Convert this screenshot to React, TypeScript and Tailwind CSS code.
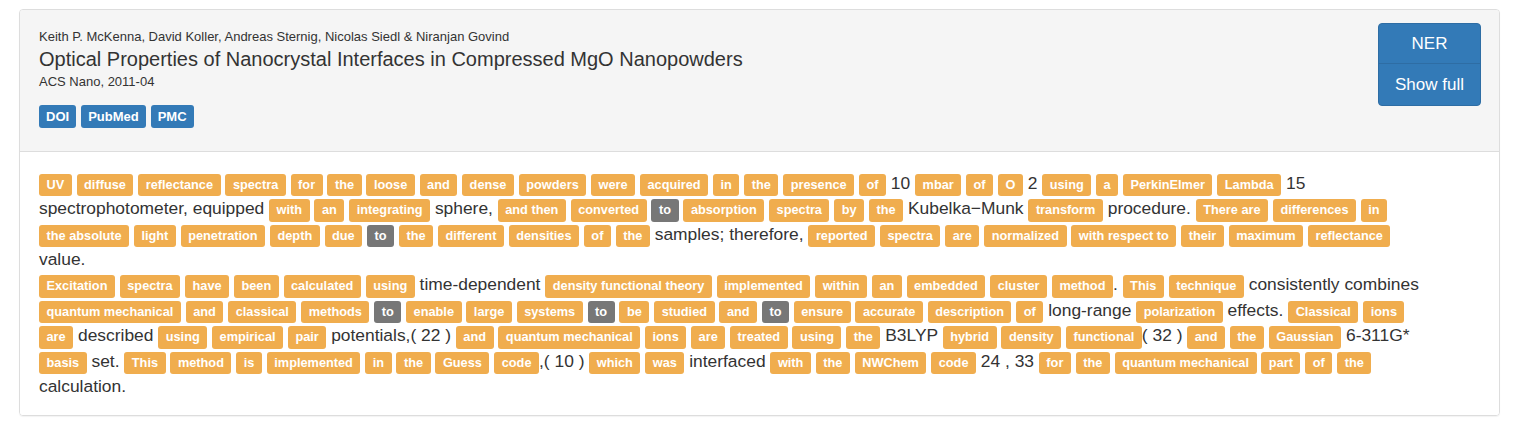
import React from 'react';

type Tok = { k: 'w' | 'd' | 't'; s: string };

// w = warning label, d = default (grey) label, t = plain text
const parse = (src: string): Tok[] => {
  const out: Tok[] = [];
  const re = /\[([^\]]+)\]|\{([^}]+)\}|([^[{]+)/g;
  let m: RegExpExecArray | null;
  while ((m = re.exec(src))) {
    if (m[1]) out.push({ k: 'w', s: m[1] });
    else if (m[2]) out.push({ k: 'd', s: m[2] });
    else out.push({ k: 't', s: m[3] });
  }
  return out;
};

const para1 =
  '[UV] [diffuse] [reflectance] [spectra] [for] [the] [loose] [and] [dense] [powders] [were] [acquired] [in] [the] [presence] [of] 10 [mbar] [of] [O] 2 [using] [a] [PerkinElmer] [Lambda] 15 spectrophotometer, equipped [with] [an] [integrating] sphere, [and then] [converted] {to} [absorption] [spectra] [by] [the] Kubelka−Munk [transform] procedure. [There are] [differences] [in] [the absolute] [light] [penetration] [depth] [due] {to} [the] [different] [densities] [of] [the] samples; therefore, [reported] [spectra] [are] [normalized] [with respect to] [their] [maximum] [reflectance] value.';

const para2 =
  '[Excitation] [spectra] [have] [been] [calculated] [using] time-dependent [density functional theory] [implemented] [within] [an] [embedded] [cluster] [method]. [This] [technique] consistently combines [quantum mechanical] [and] [classical] [methods] {to} [enable] [large] [systems] {to} [be] [studied] [and] {to} [ensure] [accurate] [description] [of] long-range [polarization] effects. [Classical] [ions] [are] described [using] [empirical] [pair] potentials,( 22 ) [and] [quantum mechanical] [ions] [are] [treated] [using] [the] B3LYP [hybrid] [density] [functional]( 32 ) [and] [the] [Gaussian] 6-311G* [basis] set. [This] [method] [is] [implemented] [in] [the] [Guess] [code],( 10 ) [which] [was] interfaced [with] [the] [NWChem] [code] 24 , 33 [for] [the] [quantum mechanical] [part] [of] [the] calculation.';

const Para = ({ src }: { src: string }) => (
  <div>
    {parse(src).map((t, i) =>
      t.k === 't' ? (
        <React.Fragment key={i}>{t.s}</React.Fragment>
      ) : (
        <span
          key={i}
          className={`inline-block rounded-[3px] px-[7.5px] pt-[4px] pb-[5px] text-[12.75px] font-bold leading-[13.5px] text-white ${
            t.k === 'w' ? 'bg-[#f0ad4e]' : 'bg-[#777777]'
          }`}
        >
          {t.s}
        </span>
      )
    )}
  </div>
);

const App: React.FC = () => {
  return (
    <div className="min-h-screen bg-white pt-[9px] pl-[19px] font-['Liberation_Sans',Arial,sans-serif] text-[#333333]">
      <div className="w-[1481px] overflow-hidden rounded-[4px] border border-[#dddddd] shadow-[0_1px_1px_rgba(0,0,0,0.05)]">
        <div className="flex justify-between border-b border-[#dddddd] bg-[#f5f5f5] pl-[19px] pr-[18px] pt-[13px] pb-[23px]">
          <div className="pt-[5px]">
            <div className="text-[13px] leading-[18px]">
              Keith P. McKenna, David Koller, Andreas Sternig, Nicolas Siedl &amp; Niranjan Govind
            </div>
            <div className="text-[20px] leading-[26px]">
              Optical Properties of Nanocrystal Interfaces in Compressed MgO Nanopowders
            </div>
            <div className="mt-[1px] text-[13px] leading-[18px]">ACS Nano, 2011-04</div>
            <div className="mt-[14px] flex gap-[5px]">
              {['DOI', 'PubMed', 'PMC'].map((b) => (
                <span
                  key={b}
                  className="rounded-[3px] bg-[#337ab7] px-[7px] pt-[4.5px] pb-[5px] text-[13px] font-bold leading-[13px] text-white"
                >
                  {b}
                </span>
              ))}
            </div>
          </div>
          <div className="flex h-[83px] w-[103px] flex-col overflow-hidden rounded-[4px] border border-[#2e6da4] bg-[#337ab7] text-[17px] text-white">
            <div className="flex h-[40px] items-center justify-center border-b border-[#2e6da4]">NER</div>
            <div className="flex flex-1 items-center justify-center">Show full</div>
          </div>
        </div>
        <div className="bg-white pl-[19px] pt-[19px] pb-[16px]">
          <div className="w-[1396px] text-[17.4px] leading-[25px]">
            <Para src={para1} />
            <Para src={para2} />
          </div>
        </div>
      </div>
    </div>
  );
};

export default App;
